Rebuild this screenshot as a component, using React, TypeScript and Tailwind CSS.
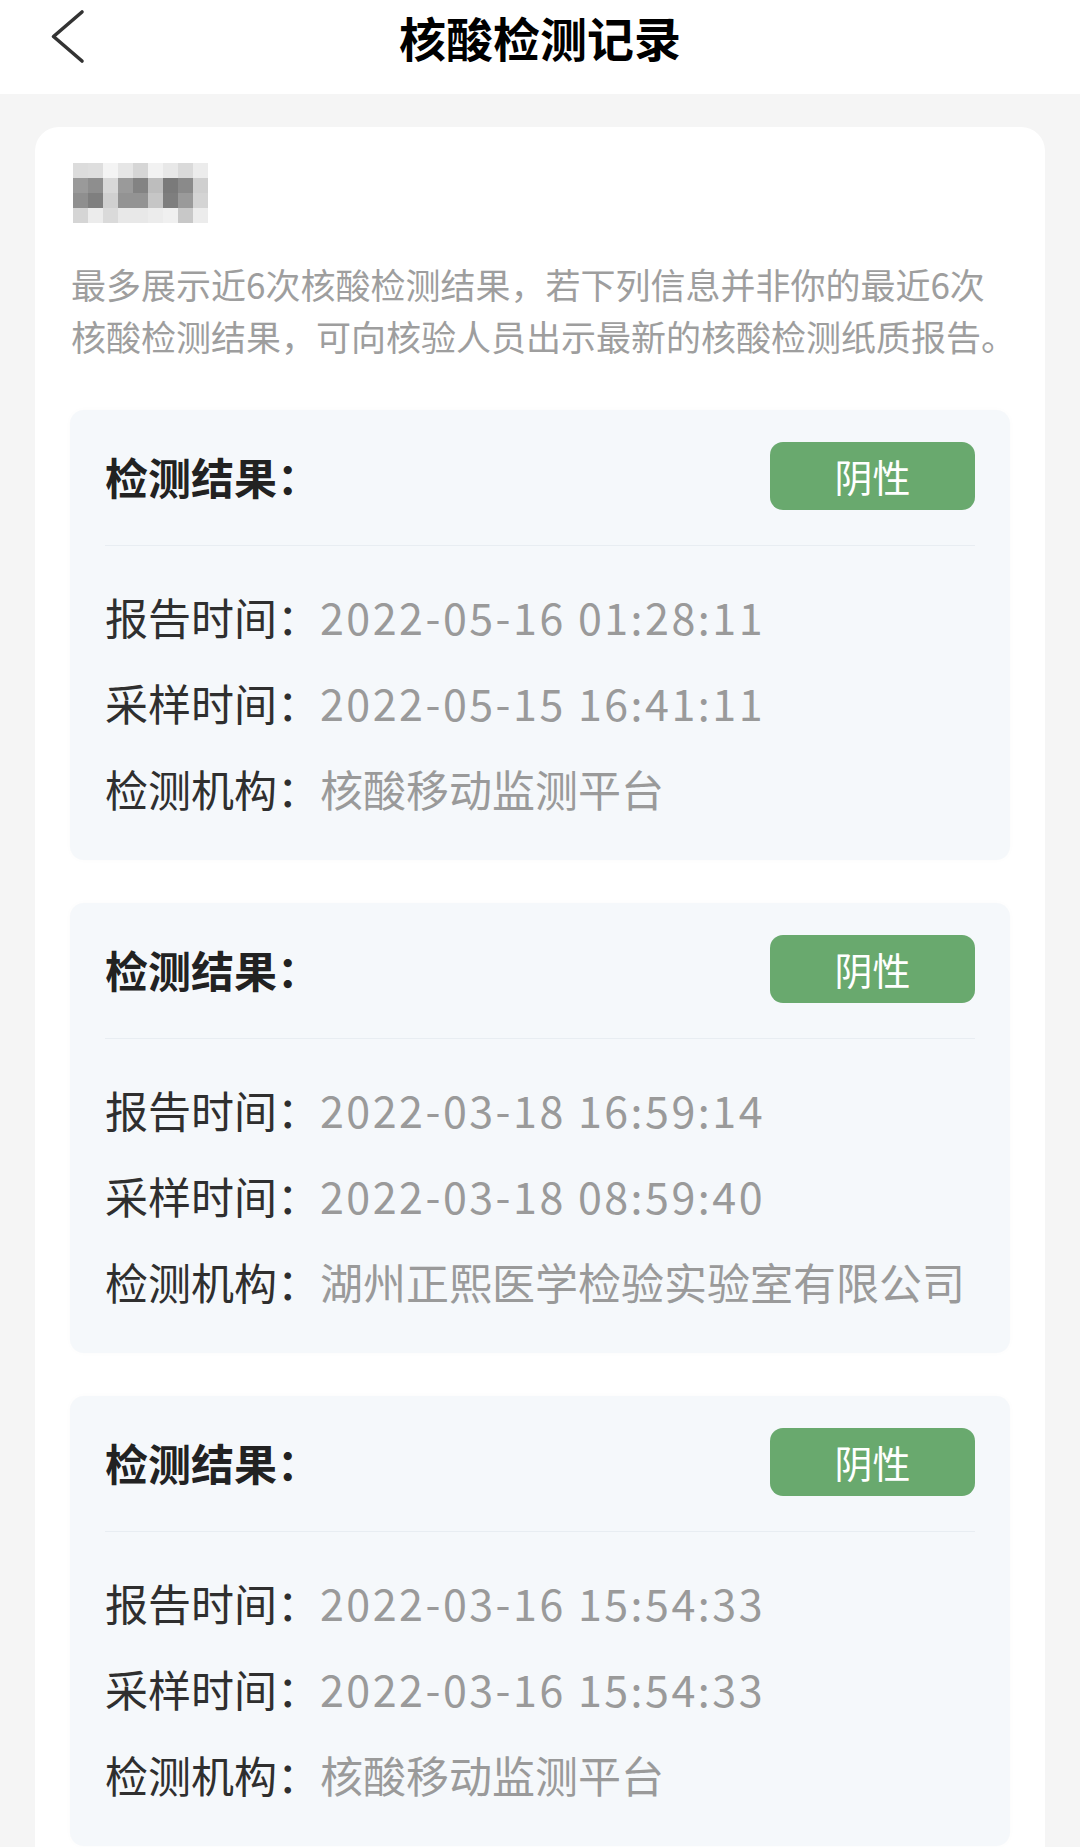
import React from "react";

const FONT = { fontFamily: '"Noto Sans CJK SC", "Noto Sans", sans-serif' };

type Rec = {
  report: string;
  sample: string;
  org: string;
};

const records: Rec[] = [
  {
    report: "2022-05-16 01:28:11",
    sample: "2022-05-15 16:41:11",
    org: "核酸移动监测平台",
  },
  {
    report: "2022-03-18 16:59:14",
    sample: "2022-03-18 08:59:40",
    org: "湖州正熙医学检验实验室有限公司",
  },
  {
    report: "2022-03-16 15:54:33",
    sample: "2022-03-16 15:54:33",
    org: "核酸移动监测平台",
  },
];

const pixelRows: string[][] = [
  ["bg-[#dcdcdc]", "bg-[#dedede]", "bg-[#f4f4f4]", "bg-[#e6e6e6]", "bg-[#d6d6d6]", "bg-[#f2f2f2]", "bg-[#e8e8e8]", "bg-[#dadada]", "bg-[#ececec]"],
  ["bg-[#9a9a9a]", "bg-[#8e8e8e]", "bg-[#d8d8d8]", "bg-[#9a9a9a]", "bg-[#838383]", "bg-[#bdbdbd]", "bg-[#7a7a7a]", "bg-[#8a8a8a]", "bg-[#cfcfcf]"],
  ["bg-[#8f8f8f]", "bg-[#7f7f7f]", "bg-[#d0d0d0]", "bg-[#939393]", "bg-[#939393]", "bg-[#c6c6c6]", "bg-[#7e7e7e]", "bg-[#9a9a9a]", "bg-[#d4d4d4]"],
  ["bg-[#d5d5d5]", "bg-[#ececec]", "bg-[#dadada]", "bg-[#e8e8e8]", "bg-[#e8e8e8]", "bg-[#ececec]", "bg-[#f0f0f0]", "bg-[#c8c8c8]", "bg-[#ececec]"],
];

function BlurredName() {
  return (
    <div className="flex flex-col">
      {pixelRows.map((row, i) => (
        <div key={i} className="flex">
          {row.map((c, j) => (
            <div key={j} className={`w-[15px] h-[15px] ${c}`} />
          ))}
        </div>
      ))}
    </div>
  );
}

function Row({ label, value, valueClass }: { label: string; value: string; valueClass?: string }) {
  return (
    <div className="flex items-center h-[86px] text-[43px] leading-[86px] whitespace-nowrap">
      <span className="text-[#2f2f2f]">{label}</span>
      <span className={`text-[#9a9a9a] ${valueClass ?? ""}`}>{value}</span>
    </div>
  );
}

function RecordCard({ rec }: { rec: Rec }) {
  return (
    <div className="bg-[#f5f8fb] rounded-[14px] px-[35px] pt-[32px] pb-[29px] shadow-[0_0_6px_rgba(0,0,0,0.02)]">
      <div className="flex items-center justify-between h-[68px]">
        <span className="text-[43px] font-bold text-[#222222] leading-none">检测结果：</span>
        <div className="w-[205px] h-[68px] rounded-[13px] bg-[#69a96e] flex items-center justify-center text-white text-[38px] leading-none">
          阴性
        </div>
      </div>
      <div className="mt-[35px] h-px bg-[#e8edf2]" />
      <div className="pt-[27px]">
        <Row label="报告时间：" value={rec.report} valueClass="tracking-[2.5px]" />
        <Row label="采样时间：" value={rec.sample} valueClass="tracking-[2.5px]" />
        <Row label="检测机构：" value={rec.org} />
      </div>
    </div>
  );
}

export default function App() {
  return (
    <div className="w-[1080px] min-h-[1847px] bg-[#f5f5f5] overflow-hidden" style={FONT}>
      <header className="h-[94px] bg-white grid grid-cols-[1fr_auto_1fr] items-start">
        <div className="pl-[50px] pt-[9px]">
          <svg width="36" height="56" viewBox="0 0 36 56" fill="none">
            <path d="M32 3 L3.5 27.5 L32 52" stroke="#333333" strokeWidth="3.6" strokeLinecap="round" strokeLinejoin="round" />
          </svg>
        </div>
        <h1 className="pt-[13px] text-[47px] leading-[47px] font-bold text-black">核酸检测记录</h1>
        <div />
      </header>

      <main className="mx-[35px] mt-[33px] bg-white rounded-[24px] pt-[36px] pb-[40px]">
        <div className="pl-[38px]">
          <BlurredName />
        </div>
        <p className="mt-[35px] pl-[36px] text-[35px] leading-[52px] text-[#9e9e9e] whitespace-nowrap">
          最多展示近6次核酸检测结果，若下列信息并非你的最近6次
          <br />
          核酸检测结果，可向核验人员出示最新的核酸检测纸质报告。
        </p>
        <div className="mt-[48px] mx-[35px] flex flex-col gap-[43px]">
          {records.map((r, i) => (
            <RecordCard key={i} rec={r} />
          ))}
        </div>
      </main>
    </div>
  );
}
